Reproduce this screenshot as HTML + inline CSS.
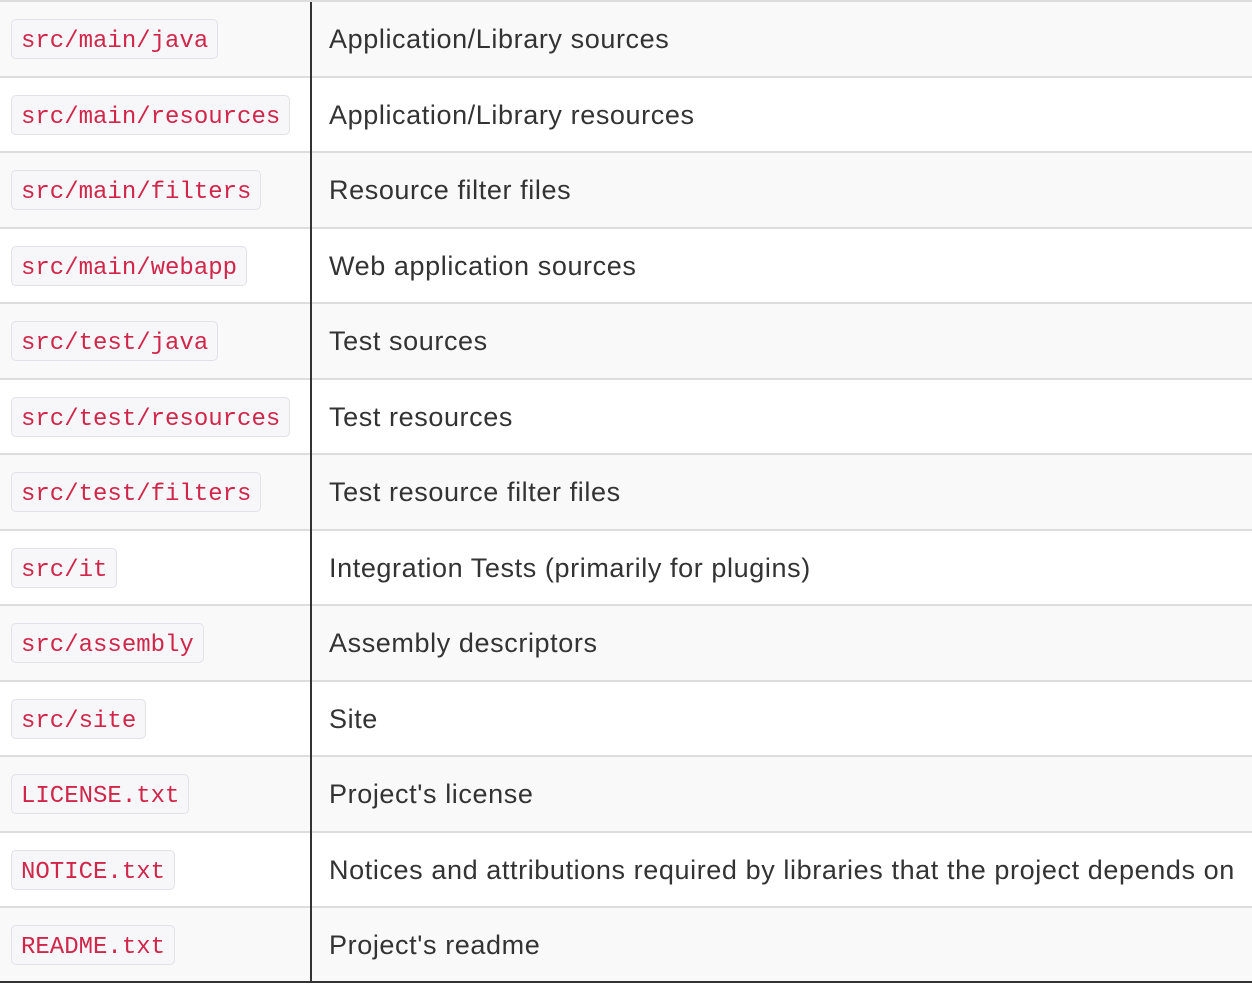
<!DOCTYPE html>
<html><head><meta charset="utf-8"><style>
html,body{margin:0;padding:0;width:1252px;height:986px;background:#fff;overflow:hidden}
.r{position:absolute;left:0;width:1252px;height:75.5px;box-sizing:border-box;border-top:2px solid #dddddd}
.r.o{background:#f9f9f9}
.c{position:absolute;left:11px;top:17px;height:40px;box-sizing:border-box;border:1.5px solid #e1e1e8;border-radius:5px;background:#f7f7f9;padding:0 9px;font:24px/43px "Liberation Mono",monospace;color:#d0264a;white-space:nowrap}
.t{position:absolute;left:329px;top:1px;font:27px/73px "Liberation Sans",sans-serif;letter-spacing:0.6px;color:#333;white-space:nowrap}
.v{position:absolute;left:310px;top:2px;width:2px;height:981px;background:#333}
.b{position:absolute;left:0;top:981px;width:1252px;height:2px;background:#333}
</style></head><body>
<div class="r o" style="top:0"><span class="c">src/main/java</span><span class="t">Application/Library sources</span></div>
<div class="r" style="top:75.5px"><span class="c">src/main/resources</span><span class="t">Application/Library resources</span></div>
<div class="r o" style="top:151px"><span class="c">src/main/filters</span><span class="t">Resource filter files</span></div>
<div class="r" style="top:226.5px"><span class="c">src/main/webapp</span><span class="t">Web application sources</span></div>
<div class="r o" style="top:302px"><span class="c">src/test/java</span><span class="t">Test sources</span></div>
<div class="r" style="top:377.5px"><span class="c">src/test/resources</span><span class="t">Test resources</span></div>
<div class="r o" style="top:453px"><span class="c">src/test/filters</span><span class="t">Test resource filter files</span></div>
<div class="r" style="top:528.5px"><span class="c">src/it</span><span class="t">Integration Tests (primarily for plugins)</span></div>
<div class="r o" style="top:604px"><span class="c">src/assembly</span><span class="t">Assembly descriptors</span></div>
<div class="r" style="top:679.5px"><span class="c">src/site</span><span class="t">Site</span></div>
<div class="r o" style="top:755px"><span class="c">LICENSE.txt</span><span class="t">Project's license</span></div>
<div class="r" style="top:830.5px"><span class="c">NOTICE.txt</span><span class="t">Notices and attributions required by libraries that the project depends on</span></div>
<div class="r o" style="top:906px"><span class="c">README.txt</span><span class="t">Project's readme</span></div>
<div class="v"></div><div class="b"></div>
</body></html>
